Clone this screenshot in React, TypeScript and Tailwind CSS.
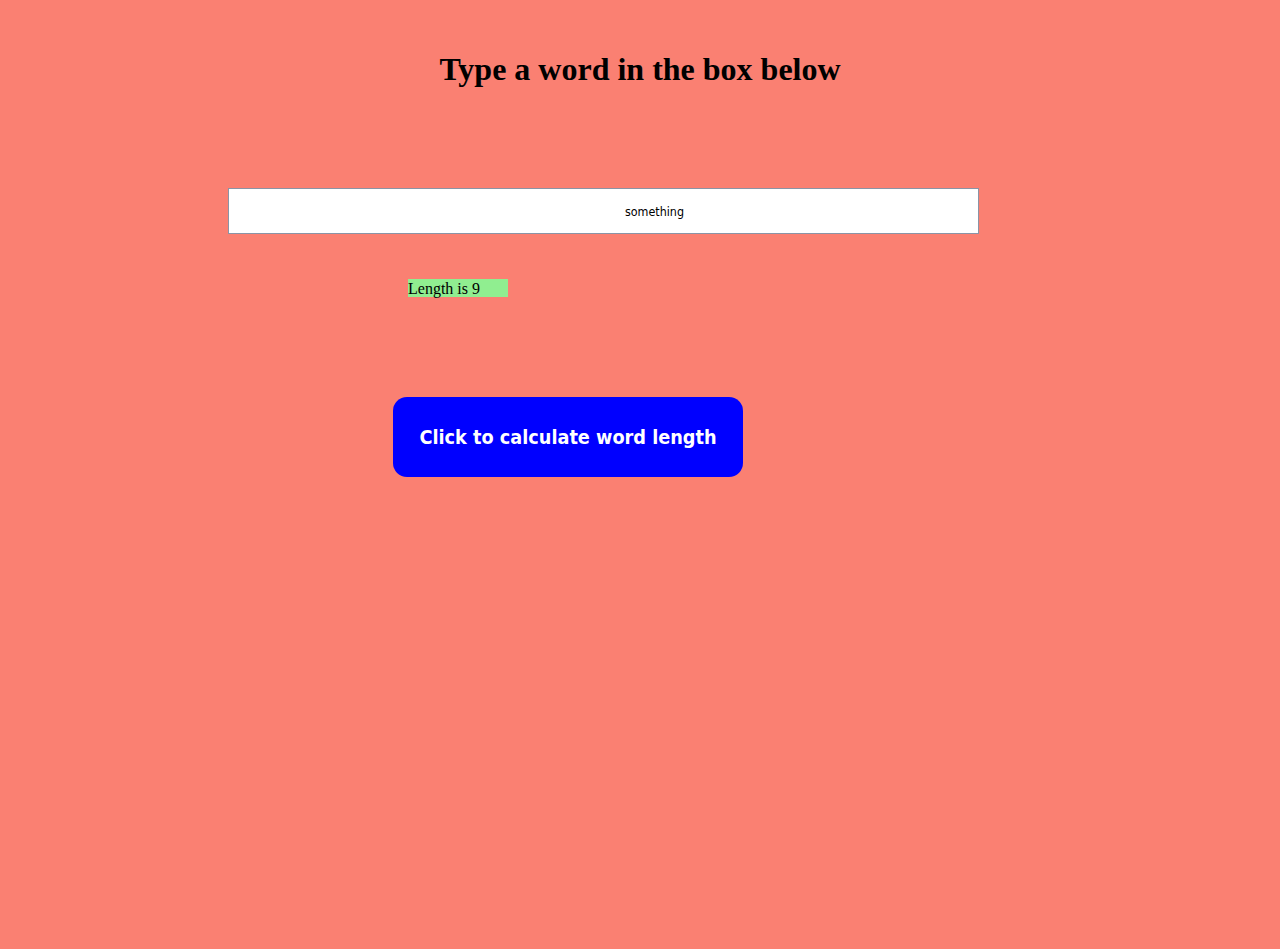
import React, { useState } from "react";

export default function App() {
  const [word, setWord] = useState("something");
  const [len, setLen] = useState(9);
  return (
    <div className="min-h-[949px] w-full bg-[#fa8072] pt-[51px] font-['Liberation_Serif',serif] text-black">
      <h1 className="text-center text-[32px] font-bold leading-[37px]">Type a word in the box below</h1>
      <input
        value={word}
        onChange={(e) => setWord(e.target.value)}
        className="ml-[228px] mt-[100px] block h-[46px] w-[751px] border border-[#8a94a6] bg-white pl-[102px] text-center text-[12.4px] font-['DejaVu_Sans_Condensed','DejaVu_Sans',sans-serif] outline-none"
      />
      <div className="ml-[408px] mt-[45px] h-[18px] w-[100px] bg-[#90ee90] text-[16px] leading-[20px]">Length is {len}</div>
      <button
        onClick={() => setLen(word.length)}
        className="ml-[393px] mt-[100px] block h-[80px] w-[350px] rounded-[14px] bg-[#0000ff] pt-[2px] text-[19.7px] font-bold text-white font-['DejaVu_Sans_Condensed','DejaVu_Sans',sans-serif]"
      >
        Click to calculate word length
      </button>
    </div>
  );
}
